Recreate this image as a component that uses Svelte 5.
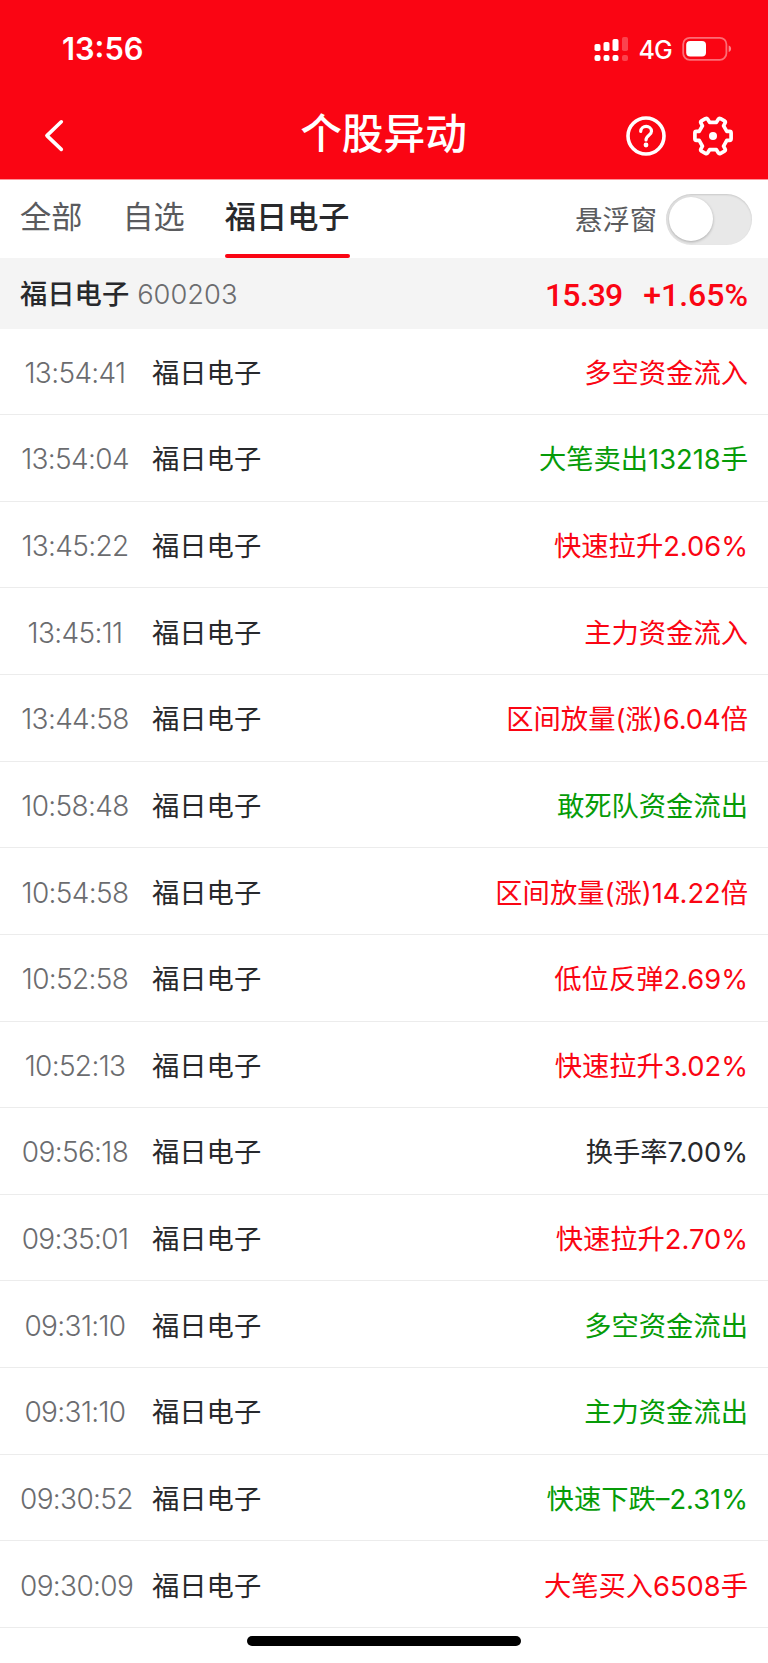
<script lang="ts">
	const tabs = ['全部', '自选', '福日电子'];
	let active = $state(2);
	let floating = $state(false);

	const stock = { name: '福日电子', code: '600203', price: '15.39', change: '+1.65%' };

	const events = [
		{ time: '13:54:41', text: '多空资金流入', type: 'up' },
		{ time: '13:54:04', text: '大笔卖出13218手', type: 'down' },
		{ time: '13:45:22', text: '快速拉升2.06%', type: 'up' },
		{ time: '13:45:11', text: '主力资金流入', type: 'up' },
		{ time: '13:44:58', text: '区间放量(涨)6.04倍', type: 'up' },
		{ time: '10:58:48', text: '敢死队资金流出', type: 'down' },
		{ time: '10:54:58', text: '区间放量(涨)14.22倍', type: 'up' },
		{ time: '10:52:58', text: '低位反弹2.69%', type: 'up' },
		{ time: '10:52:13', text: '快速拉升3.02%', type: 'up' },
		{ time: '09:56:18', text: '换手率7.00%', type: 'flat' },
		{ time: '09:35:01', text: '快速拉升2.70%', type: 'up' },
		{ time: '09:31:10', text: '多空资金流出', type: 'down' },
		{ time: '09:31:10', text: '主力资金流出', type: 'down' },
		{ time: '09:30:52', text: '快速下跌–2.31%', type: 'down' },
		{ time: '09:30:09', text: '大笔买入6508手', type: 'up' }
	];
</script>

<div class="screen">
	<header>
		<div class="status">
			<span class="clock">13:56</span>
			<div class="status-right">
				<svg width="35" height="26" viewBox="0 0 35 26" fill="#fff">
					<rect x="0.5" y="8" width="6" height="7" rx="1.8" />
					<rect x="9.5" y="6" width="6" height="9" rx="1.8" />
					<rect x="18.5" y="3" width="6" height="12" rx="1.8" />
					<rect x="28" y="1" width="6" height="14" rx="1.8" opacity="0.25" />
					<rect x="0.5" y="19" width="6" height="6" rx="2" />
					<rect x="9.5" y="19" width="6" height="6" rx="2" />
					<rect x="18.5" y="19" width="6" height="6" rx="2" />
					<rect x="28" y="19" width="6" height="6" rx="2" opacity="0.25" />
				</svg>
				<span class="network">4G</span>
				<svg width="50" height="26" viewBox="0 0 50 26">
					<rect x="1.2" y="1.8" width="43.2" height="22" rx="6.5" fill="none" stroke="#fff" stroke-opacity="0.42" stroke-width="1.8" />
					<rect x="4.2" y="5" width="19.8" height="15.6" rx="4" fill="#fff" />
					<path d="M46.7 9.5c3.2 1.2 3.2 5.4 0 6.6z" fill="#fff" fill-opacity="0.5" />
				</svg>
			</div>
		</div>
		<div class="nav">
			<button class="icon-btn" aria-label="返回">
				<svg width="22" height="36" viewBox="0 0 22 36" fill="none" stroke="#fff" stroke-width="3.6" stroke-linecap="round" stroke-linejoin="round">
					<path d="M19.3 3.8L4.9 17.6L19.3 31.4" />
				</svg>
			</button>
			<h1>个股异动</h1>
			<div class="nav-right">
				<button class="icon-btn" aria-label="帮助">
					<svg width="40" height="40" viewBox="0 0 40 40" fill="none" stroke="#fff" stroke-linecap="round">
						<circle cx="20" cy="20" r="18" stroke-width="3.6" />
						<path d="M14.7 15.4C15 8.8 25.4 8.8 25.5 15.3C25.5 19.3 20 19.2 20 24" stroke-width="3.2" />
						<circle cx="20" cy="29" r="2.4" fill="#fff" stroke="none" />
					</svg>
				</button>
				<button class="icon-btn" aria-label="设置">
					<svg width="40" height="40" viewBox="0 0 40 40" fill="none" stroke="#fff" stroke-width="3.7" stroke-linejoin="round">
						<path d="M1.9 17Q1.9 15.4 3.4 15.4H6.2L9.4 9.8L8 7.2Q7.2 5.7 8.5 4.9L12.4 2.7Q13.9 1.9 14.7 3.2L16.6 6.3H23.4L25.3 3.2Q26.1 1.9 27.6 2.7L31.5 4.9Q32.8 5.7 32 7.2L30.6 9.8L33.8 15.4H36.6Q38.1 15.4 38.1 17V22.8Q38.1 24.4 36.6 24.4H33.8L30.6 30.2L32 32.8Q32.8 34.3 31.5 35.1L27.6 37.3Q26.1 38.1 25.3 36.8L23.4 33.7H16.6L14.7 36.8Q13.9 38.1 12.4 37.3L8.5 35.1Q7.2 34.3 8 32.8L9.4 30.2L6.2 24.4H3.4Q1.9 24.4 1.9 22.8Z" />
						<circle cx="20" cy="20" r="4" fill="#fff" stroke="none" />
					</svg>
				</button>
			</div>
		</div>
	</header>

	<nav class="tabs">
		{#each tabs as tab, i}
			<button class="tab" class:active={active === i} onclick={() => (active = i)}>{tab}</button>
		{/each}
		<div class="floating">
			<span class="label">悬浮窗</span>
			<button class="switch" class:on={floating} aria-label="悬浮窗" onclick={() => (floating = !floating)}>
				<span class="knob"></span>
			</button>
		</div>
	</nav>

	<div class="stock">
		<span class="stock-name">{stock.name}</span>
		<span class="code">{stock.code}</span>
		<span class="price">{stock.price}</span>
		<span class="change">{stock.change}</span>
	</div>

	<ul>
		{#each events as event}
			<li>
				<span class="time">{event.time}</span>
				<span class="name">{stock.name}</span>
				<span class="event {event.type}">{event.text}</span>
			</li>
		{/each}
	</ul>

	<footer><div class="home-bar"></div></footer>
</div>

<style>
	:global(body) {
		background: #fff;
	}
	.screen {
		width: 768px;
		height: 1663px;
		overflow: hidden;
		display: flex;
		flex-direction: column;
		background: #fff;
		color: #28292c;
		font-family: Inter, 'Noto Sans CJK SC', sans-serif;
	}
	button {
		padding: 0;
		border: none;
		background: none;
		font: inherit;
		color: inherit;
		cursor: pointer;
	}
	svg {
		display: block;
	}
	header {
		flex: none;
		height: 180px;
		background: #fa0513;
		border-bottom: 1px solid #fd949a;
		box-sizing: border-box;
		color: #fff;
	}
	.status {
		display: flex;
		align-items: center;
		justify-content: space-between;
		height: 98px;
		padding: 0 36px 0 62px;
		box-sizing: border-box;
	}
	.clock {
		margin-bottom: 2px;
		font-size: 30.8px;
		font-weight: 600;
	}
	.status-right {
		display: flex;
		align-items: center;
	}
	.network {
		margin: 1px 10px 0 10px;
		font-size: 25px;
		font-weight: 500;
		letter-spacing: -0.8px;
	}
	.nav {
		display: grid;
		grid-template-columns: 1fr auto 1fr;
		align-items: center;
		height: 76px;
		padding: 0 35px 0 42px;
	}
	.nav .icon-btn {
		justify-self: start;
	}
	h1 {
		margin: 0 8px 4px 0;
		font-size: 41.7px;
		font-weight: 500;
		line-height: 72px;
	}
	.nav-right {
		display: flex;
		justify-content: flex-end;
		gap: 27px;
	}
	.tabs {
		flex: none;
		display: flex;
		height: 78px;
		padding: 0 16px 0 20px;
		box-sizing: border-box;
	}
	.tab {
		display: flex;
		flex-direction: column;
		margin-right: 40px;
		font-size: 31.2px;
		line-height: 74px;
		color: #5a5b5e;
		white-space: nowrap;
	}
	.tab.active {
		font-weight: 500;
		color: #28292c;
	}
	.tab.active::after {
		content: '';
		width: 100%;
		height: 4px;
		border-radius: 2px;
		background: #fa0513;
	}
	.floating {
		display: flex;
		align-items: center;
		margin-left: auto;
		gap: 9px;
		font-size: 27.3px;
		color: #5a5b5e;
	}
	.label {
		margin-bottom: 2px;
	}
	.switch {
		width: 86px;
		height: 51px;
		padding: 3px;
		border-radius: 26px;
		background: #e8e8e8;
		box-shadow: inset 0 1px 2px #0002;
	}
	.knob {
		display: block;
		width: 44px;
		height: 44px;
		border-radius: 50%;
		background: #fff;
		box-shadow: 0 1px 3px #0004;
	}
	.switch.on {
		background: #fa0513;
	}
	.switch.on .knob {
		margin-left: auto;
	}
	.stock {
		flex: none;
		display: flex;
		align-items: center;
		height: 70.5px;
		padding: 0 20px;
		box-sizing: border-box;
		background: #f4f4f4;
		font-size: 27.3px;
	}
	.stock-name {
		margin-bottom: 2px;
		font-weight: 500;
	}
	.code {
		margin: 2px 0 0 8px;
		font-weight: 300;
		color: #6b6c6f;
	}
	.price {
		margin-left: auto;
		letter-spacing: -0.9px;
	}
	.price,
	.change {
		padding-top: 3px;
		font-family: Roboto, sans-serif;
		font-size: 32px;
		font-weight: 500;
		color: #fa0513;
	}
	.change {
		margin-left: 21px;
	}
	ul {
		margin: 0;
		padding: 0;
		list-style: none;
	}
	li {
		display: flex;
		align-items: center;
		height: 86.63px;
		padding: 0 20px;
		box-sizing: border-box;
		border-bottom: 1px solid #ececec;
		font-size: 27.3px;
	}
	.time {
		width: 110px;
		padding-top: 3px;
		text-align: center;
		font-size: 28px;
		font-weight: 300;
		letter-spacing: -0.65px;
		white-space: nowrap;
		color: #6b6c6f;
	}
	.name {
		margin: 0 0 1px 22px;
	}
	.event {
		margin: 0 0 1px auto;
		white-space: nowrap;
	}
	.up {
		color: #fa0513;
	}
	.down {
		color: #069b08;
	}
	footer {
		display: flex;
		justify-content: center;
		padding-top: 8px;
	}
	.home-bar {
		width: 274px;
		height: 10px;
		border-radius: 5px;
		background: #000;
	}
</style>
